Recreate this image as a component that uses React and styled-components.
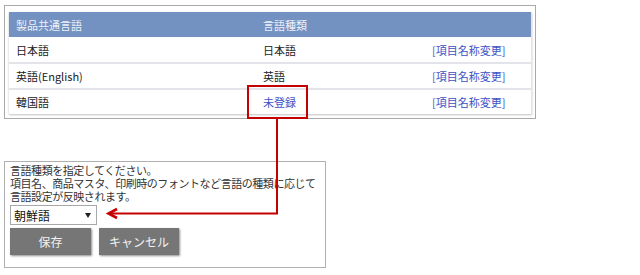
import styled, { createGlobalStyle } from "styled-components";

const rows = [
  { name: "日本語", kind: "日本語" },
  { name: "英語(English)", kind: "英語" },
  { name: "韓国語", kind: "未登録", unset: true },
];

export default () => (
  <Page>
    <GlobalStyle />
    <TopPanel>
      <Table>
        <HeadRow>
          <Cell>製品共通言語</Cell>
          <Cell>言語種類</Cell>
          <Cell />
        </HeadRow>
        {rows.map(r => (
          <Row key={r.name}>
            <Cell>{r.name}</Cell>
            <Cell $link={r.unset}>{r.kind}</Cell>
            <Cell $link>[項目名称変更]</Cell>
          </Row>
        ))}
      </Table>
    </TopPanel>

    <BottomPanel>
      <Note>
        言語種類を指定してください。
        <br />
        項目名、商品マスタ、印刷時のフォントなど言語の種類に応じて
        <br />
        言語設定が反映されます。
      </Note>
      <SelectBox>
        朝鮮語
        <Caret />
      </SelectBox>
      <Buttons>
        <Button $w={81}>保存</Button>
        <Button $w={80}>キャンセル</Button>
      </Buttons>
    </BottomPanel>

    <Callout width="640" height="275" viewBox="0 0 640 275">
      <rect x="248" y="86" width="59" height="32" fill="none" stroke="#c40000" strokeWidth="2" />
      <polyline points="277,118 277,213.5 109,213.5" fill="none" stroke="#c40000" strokeWidth="2" />
      <polyline points="117,209 108.5,213.5 117,218" fill="none" stroke="#c40000" strokeWidth="2.6" />
    </Callout>
  </Page>
);

const GlobalStyle = createGlobalStyle`
  body {
    margin: 0;
    background: #fff;
    font-family: "Noto Sans CJK JP", "Noto Sans", sans-serif;
    color: #222;
  }
`;

const Page = styled.div`
  position: relative;
  width: 640px;
  height: 275px;
  padding: 5px 0 0 4px;
  box-sizing: border-box;
`;

const TopPanel = styled.div`
  width: 532px;
  height: 114px;
  box-sizing: border-box;
  border: 1px solid #a9a9a9;
  padding: 6px 3px 0 4px;
`;

const Table = styled.div`
  display: grid;
  grid-template-columns: 247px 169px 1fr;
  box-shadow: 0 1px 2px rgba(0, 0, 0, 0.25);
  border-right: 1px solid #e4e4ea;
  font-size: 11px;
`;

const HeadRow = styled.div`
  display: contents;

  & > div {
    background: #7391c1;
    color: #eef2f8;
    height: 25px;
  }
`;

const Row = styled.div`
  display: contents;

  & > div {
    height: 24px;
    border-top: 2px solid #e3e3ea;
    background: #fff;
  }

  &:nth-child(2) > div {
    border-top: none;
    height: 25px;
  }
`;

const Cell = styled.div`
  display: flex;
  align-items: center;
  padding-left: 7px;
  color: ${p => (p.$link ? "#3d52c4" : "inherit")};
`;

const BottomPanel = styled.div`
  margin-top: 42px;
  width: 322px;
  height: 107px;
  box-sizing: border-box;
  border: 1px solid #b0b0b0;
  padding: 2px 0 0 5px;
`;

const Note = styled.div`
  font-size: 11px;
  line-height: 13px;
  letter-spacing: -0.45px;
  white-space: nowrap;
  color: #333;
`;

const SelectBox = styled.div`
  margin-top: 2px;
  width: 87px;
  height: 20px;
  box-sizing: border-box;
  border: 1px solid #a8a8a8;
  display: flex;
  align-items: center;
  justify-content: space-between;
  padding: 0 5px 0 3px;
  font-size: 12px;
  color: #111;
`;

const Caret = styled.span`
  width: 0;
  height: 0;
  border-left: 3px solid transparent;
  border-right: 3px solid transparent;
  border-top: 5px solid #222;
`;

const Buttons = styled.div`
  display: flex;
  gap: 8px;
  margin-top: 3px;
`;

const Button = styled.div`
  width: ${p => p.$w}px;
  height: 27px;
  display: flex;
  align-items: center;
  justify-content: center;
  background: #767676;
  color: #f2f2f2;
  font-size: 12px;
  box-shadow: 1px 1px 2px rgba(0, 0, 0, 0.45);
`;

const Callout = styled.svg`
  position: absolute;
  left: 0;
  top: 0;
  pointer-events: none;
`;
